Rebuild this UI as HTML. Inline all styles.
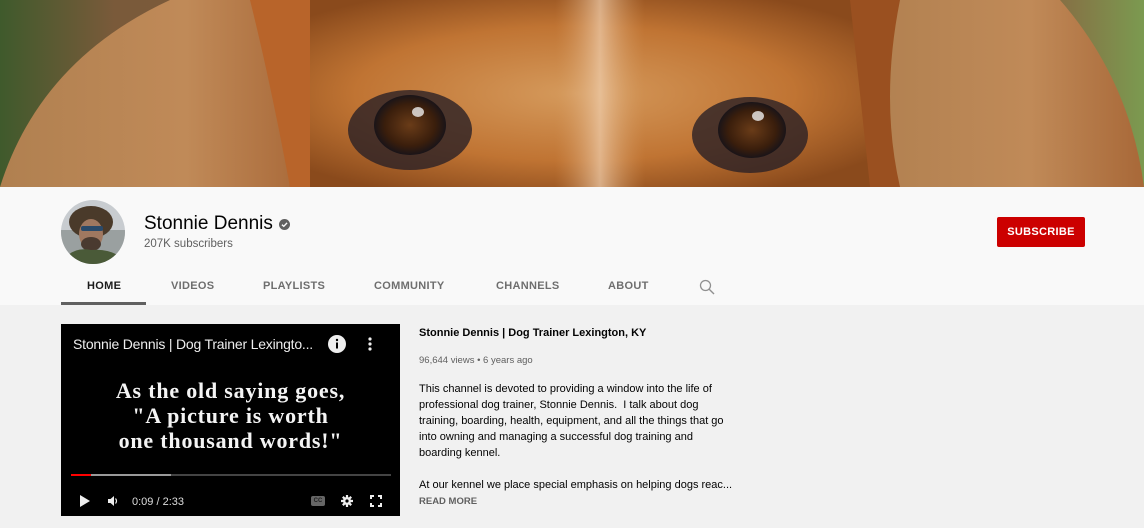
<!DOCTYPE html>
<html><head><meta charset="utf-8">
<style>
*{margin:0;padding:0;box-sizing:border-box}
body{width:1144px;height:528px;overflow:hidden;background:#f1f1f1;font-family:"Liberation Sans",Arial,sans-serif;position:relative}
.abs{position:absolute}
.tab{position:absolute;top:280px;font-size:11px;letter-spacing:.3px;color:#606060;font-weight:bold;opacity:.9}
</style></head><body>
<svg class="abs" style="left:0;top:0" width="1144" height="187" viewBox="0 0 1144 187">
<defs>
<linearGradient id="bg" x1="0" x2="1"><stop offset="0" stop-color="#3f5a2c"/><stop offset=".1" stop-color="#7a5a3a"/><stop offset=".9" stop-color="#8a6040"/><stop offset="1" stop-color="#7b9a50"/></linearGradient>
<radialGradient id="face" cx=".5" cy=".5" r=".6"><stop offset="0" stop-color="#d59a5c"/><stop offset=".6" stop-color="#c07433"/><stop offset="1" stop-color="#8a4a1c"/></radialGradient>
<radialGradient id="eye" cx=".5" cy=".5" r=".5"><stop offset="0" stop-color="#6a3c18"/><stop offset=".7" stop-color="#3a1e0c"/><stop offset="1" stop-color="#1a1418"/></radialGradient>
<linearGradient id="stripe" x1="0" x2="1"><stop offset="0" stop-color="#d49a60" stop-opacity="0"/><stop offset=".5" stop-color="#f0d0b0"/><stop offset="1" stop-color="#d49a60" stop-opacity="0"/></linearGradient>
<linearGradient id="earL" x1="0" x2="1"><stop offset="0" stop-color="#b08050"/><stop offset=".6" stop-color="#c08a58"/><stop offset="1" stop-color="#a86838"/></linearGradient>
</defs>
<rect width="1144" height="187" fill="url(#bg)"/>
<path d="M170 0 L300 0 L310 187 L0 187 Q40 60 170 0Z" fill="url(#earL)"/>
<path d="M860 0 L1060 0 Q1130 80 1144 187 L880 187Z" fill="url(#earL)"/>
<path d="M270 0 L880 0 L880 187 L290 187Z" fill="url(#face)"/>
<path d="M250 0 L310 0 L310 187 L290 187Q270 80 250 0Z" fill="#b8642a"/>
<path d="M850 0 L900 0 Q880 100 900 187 L870 187Z" fill="#9a5020"/>
<rect x="555" y="0" width="90" height="187" fill="url(#stripe)" opacity=".7"/>
<ellipse cx="410" cy="130" rx="62" ry="40" fill="#2a2026" opacity=".8"/>
<ellipse cx="750" cy="135" rx="58" ry="38" fill="#2a2026" opacity=".8"/>
<ellipse cx="410" cy="125" rx="36" ry="30" fill="url(#eye)"/>
<ellipse cx="752" cy="130" rx="34" ry="28" fill="url(#eye)"/>
<ellipse cx="418" cy="112" rx="6" ry="5" fill="#eee" opacity=".8"/>
<ellipse cx="758" cy="116" rx="6" ry="5" fill="#eee" opacity=".8"/>
</svg>
<div class="abs" style="left:0;top:187px;width:1144px;height:118px;background:#f9f9f9"></div>
<svg class="abs" style="left:61px;top:200px" width="64" height="64" viewBox="0 0 64 64">
<clipPath id="c"><circle cx="32" cy="32" r="32"/></clipPath>
<g clip-path="url(#c)"><rect width="64" height="64" fill="#c8ccd0"/><rect y="30" width="64" height="34" fill="#9aa0a0"/>
<ellipse cx="30" cy="22" rx="22" ry="16" fill="#4a3a2a"/><ellipse cx="30" cy="34" rx="12" ry="15" fill="#a07860"/>
<rect x="20" y="26" width="22" height="5" rx="2" fill="#2a4a6a"/><ellipse cx="30" cy="44" rx="10" ry="7" fill="#4a3a30"/>
<path d="M0 64 Q10 46 30 50 Q50 48 64 60 L64 64Z" fill="#4a5a38"/></g>
</svg>
<div class="abs" style="left:144px;top:213px;font-size:19px;color:#030303">Stonnie Dennis</div>
<svg class="abs" style="left:279px;top:219px" width="11" height="11" viewBox="0 0 12 12"><circle cx="6" cy="6" r="6" fill="#606060"/><path d="M3.2 6.2 L5.2 8 L8.8 4.2" stroke="#f9f9f9" stroke-width="1.5" fill="none"/></svg>
<div class="abs" style="left:144px;top:238px;font-size:11.5px;color:#606060">207K subscribers</div>
<div class="abs" style="left:997px;top:217px;width:88px;height:30px;background:#cc0000;border-radius:2px;color:#fff;font-size:11px;font-weight:bold;letter-spacing:.3px;text-align:center;line-height:30px">SUBSCRIBE</div>
<div class="tab" style="left:87px;color:#030303">HOME</div>
<div class="abs" style="left:61px;top:302px;width:85px;height:3px;background:#606060"></div>
<div class="tab" style="left:171px">VIDEOS</div>
<div class="tab" style="left:263px">PLAYLISTS</div>
<div class="tab" style="left:374px">COMMUNITY</div>
<div class="tab" style="left:496px">CHANNELS</div>
<div class="tab" style="left:608px">ABOUT</div>
<svg class="abs" style="left:699px;top:279px" width="16" height="16" viewBox="0 0 16 16"><circle cx="6.5" cy="6.5" r="5" stroke="#909090" stroke-width="1.3" fill="none"/><path d="M10.2 10.2 L15 15" stroke="#909090" stroke-width="1.4"/></svg>
<div class="abs" style="left:61px;top:324px;width:339px;height:192px;background:#000"></div>
<div class="abs" style="left:73px;top:336px;font-size:14px;color:#eee;letter-spacing:-.2px">Stonnie Dennis | Dog Trainer Lexingto...</div>
<svg class="abs" style="left:328px;top:335px" width="18" height="18" viewBox="0 0 18 18"><circle cx="9" cy="9" r="9" fill="#eee"/><rect x="8" y="7.5" width="2" height="6" fill="#000"/><circle cx="9" cy="5" r="1.2" fill="#000"/></svg>
<svg class="abs" style="left:366px;top:336px" width="8" height="16"><circle cx="4" cy="3" r="1.6" fill="#eee"/><circle cx="4" cy="8" r="1.6" fill="#eee"/><circle cx="4" cy="13" r="1.6" fill="#eee"/></svg>
<div class="abs" style="left:61px;top:378px;width:339px;text-align:center;font-family:'Liberation Serif',serif;font-weight:bold;font-size:22px;letter-spacing:.8px;line-height:25px;color:#f4f4f4">As the old saying goes,<br>"A picture is worth<br>one thousand words!"</div>
<div class="abs" style="left:71px;top:474px;width:320px;height:2px;background:#444"></div>
<div class="abs" style="left:71px;top:474px;width:100px;height:2px;background:#999"></div>
<div class="abs" style="left:71px;top:474px;width:20px;height:2px;background:#f00"></div>
<svg class="abs" style="left:79px;top:494px" width="12" height="14"><path d="M1 1 L11 7 L1 13Z" fill="#eee"/></svg>
<svg class="abs" style="left:107px;top:495px" width="12" height="12"><path d="M1 4 H3.5 L7 1 V11 L3.5 8 H1Z" fill="#eee"/><path d="M8.5 3.5 Q10.5 6 8.5 8.5" stroke="#eee" fill="none" stroke-width="1.2"/></svg>
<div class="abs" style="left:132px;top:496px;font-size:11px;color:#ddd">0:09 / 2:33</div>
<div class="abs" style="left:311px;top:496px;width:14px;height:10px;background:#666;border-radius:2px;font-size:6px;color:#222;font-weight:bold;text-align:center;line-height:10px">CC</div>
<svg class="abs" style="left:341px;top:495px" width="12" height="12" viewBox="0 0 12 12"><circle cx="6" cy="6" r="4" fill="#eee"/><g stroke="#eee" stroke-width="2.2"><path d="M6 0V12M0 6H12M1.8 1.8L10.2 10.2M10.2 1.8L1.8 10.2"/></g><circle cx="6" cy="6" r="1.6" fill="#000"/></svg>
<svg class="abs" style="left:370px;top:495px" width="12" height="12" fill="none" stroke="#eee" stroke-width="2"><path d="M1 4V1H4M8 1H11V4M11 8V11H8M4 11H1V8"/></svg>
<div class="abs" style="left:419px;top:327px;font-size:11px;font-weight:bold;color:#030303">Stonnie Dennis | Dog Trainer Lexington, KY</div>
<div class="abs" style="left:419px;top:355px;font-size:9.5px;color:#606060">96,644 views • 6 years ago</div>
<div class="abs" style="left:419px;top:381px;width:330px;font-size:11px;line-height:16px;color:#030303">This channel is devoted to providing a window into the life of<br>professional dog trainer, Stonnie Dennis.&nbsp; I talk about dog<br>training, boarding, health, equipment, and all the things that go<br>into owning and managing a successful dog training and<br>boarding kennel.<br><br>At our kennel we place special emphasis on helping dogs reac...</div>
<div class="abs" style="left:419px;top:496px;font-size:9.5px;font-weight:bold;color:#606060">READ MORE</div>
</body></html>
